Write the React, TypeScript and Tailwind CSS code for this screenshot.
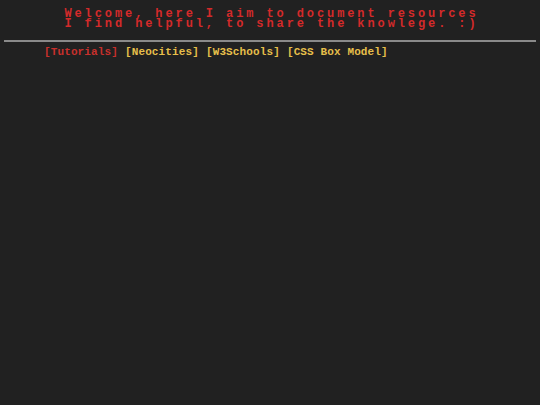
import React from "react";

const links = [
  { label: "Tutorials", active: true },
  { label: "Neocities", active: false },
  { label: "W3Schools", active: false },
  { label: "CSS Box Model", active: false },
];

export default function App() {
  return (
    <div className="min-h-[405px] w-full bg-[#212121] font-['Liberation_Mono',monospace]">
      <header className="pt-[9px] pl-[3px] text-center text-[12px] leading-[10px] tracking-[2.9px] font-bold text-[#d42a2a]">
        <p>Welcome, here I aim to document resources</p>
        <p>I find helpful, to share the knowlege. :)</p>
      </header>
      <hr className="mx-[4px] mt-[11px] border-0 h-[2px] bg-[#8a8a8a]" />
      <nav className="mt-[5px] pl-[44px] flex gap-[7px] text-[11px] leading-[10px] tracking-[0.12px] font-bold">
        {links.map((l) => (
          <a key={l.label} className={l.active ? "text-[#c8302c]" : "text-[#e6bf4a]"}>
            [{l.label}]
          </a>
        ))}
      </nav>
    </div>
  );
}
